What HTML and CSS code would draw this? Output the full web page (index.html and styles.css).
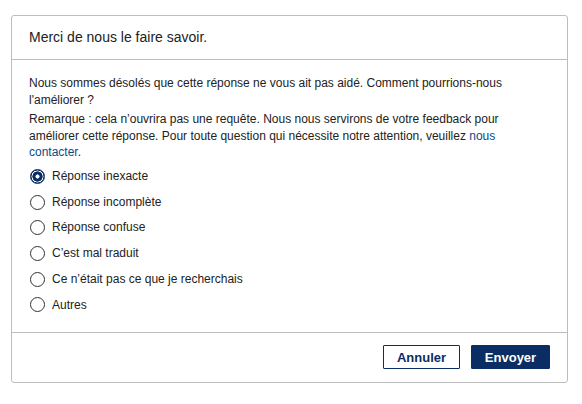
FILE: index.html
```html
<!DOCTYPE html>
<html lang="fr">
<head>
  <meta charset="UTF-8" />
  <meta name="viewport" content="width=device-width, initial-scale=1.0" />
  <title>Feedback</title>
  <link rel="stylesheet" href="styles.css">
</head>
<body>

<div class="dialog">
  <div class="dialog-header">Merci de nous le faire savoir.</div>

  <form class="dialog-body" id="feedbackForm">
    <p class="intro">Nous sommes désolés que cette réponse ne vous ait pas aidé. Comment pourrions-nous l'améliorer ?</p>
    <p class="note">Remarque : cela n’ouvrira pas une requête. Nous nous servirons de votre feedback pour améliorer cette réponse. Pour toute question qui nécessite notre attention, veuillez <a href="#contact">nous contacter</a>.</p>

    <div class="options">
      <label class="option"><input type="radio" name="reason" value="inexacte" checked /> Réponse inexacte</label>
      <label class="option"><input type="radio" name="reason" value="incomplete" /> Réponse incomplète</label>
      <label class="option"><input type="radio" name="reason" value="confuse" /> Réponse confuse</label>
      <label class="option"><input type="radio" name="reason" value="traduction" /> C’est mal traduit</label>
      <label class="option"><input type="radio" name="reason" value="autre-chose" /> Ce n’était pas ce que je recherchais</label>
      <label class="option"><input type="radio" name="reason" value="autres" /> Autres</label>
    </div>
  </form>

  <div class="dialog-footer">
    <button type="button" class="btn btn-outline">Annuler</button>
    <button type="button" class="btn btn-primary">Envoyer</button>
  </div>
</div>

</body>
</html>
```

FILE: styles.css
```css
body {
  margin: 0;
  padding: 0;
  background: #fff;
  font-family: "Liberation Sans", Arial, sans-serif;
  color: #222;
}
.dialog {
  width: 555px;
  margin: 15px 0 0 11px;
  border: 1px solid #bdbdbd;
  border-radius: 3px;
}
.dialog-header {
  height: 43px;
  line-height: 43px;
  padding: 0 17px;
  font-size: 14px;
  border-bottom: 1px solid #bdbdbd;
}
.dialog-body {
  padding: 15px 17px 14px;
  font-size: 12px;
  line-height: 16.5px;
}
.dialog-body p {
  margin: 0;
}
.note {
  margin-top: 3px !important;
}
.note a {
  color: #0b4a86;
  text-decoration: none;
}
.options {
  margin-top: 3px;
}
.option {
  display: flex;
  align-items: center;
  height: 25.7px;
  gap: 7px;
}
.option input {
  appearance: none;
  margin: 0 0 0 1px;
  width: 15px;
  height: 15px;
  border: 1px solid #333;
  border-radius: 50%;
  background: #fff;
}
.option input:checked {
  border: 1.5px solid #0a2d63;
  background: radial-gradient(circle, #fff 0 1.8px, #0a2d63 2.3px 4.9px, #fff 5.3px 5.8px, #0a2d63 6.2px);
}
.dialog-footer {
  display: flex;
  justify-content: flex-end;
  align-items: center;
  gap: 11px;
  height: 49px;
  padding: 0 17px;
  border-top: 1px solid #bdbdbd;
}
.btn {
  height: 24px;
  padding: 0;
  font-family: "Liberation Sans", Arial, sans-serif;
  font-size: 13px;
  font-weight: bold;
  border-radius: 1px;
  cursor: pointer;
}
.btn-outline {
  width: 77px;
  background: #fff;
  color: #0a2d63;
  border: 1px solid #0a2d63;
}
.btn-primary {
  width: 79px;
  background: #0a2d63;
  color: #fff;
  border: 1px solid #0a2d63;
}
```
